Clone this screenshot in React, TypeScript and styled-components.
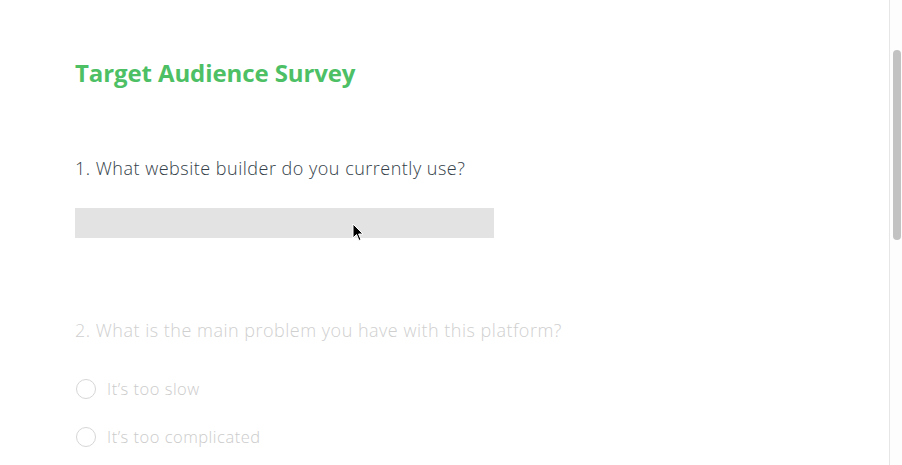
import React from 'react';
import styled, { createGlobalStyle } from 'styled-components';

const GlobalStyle = createGlobalStyle`
  html, body {
    margin: 0;
    padding: 0;
    height: 100%;
    overflow: hidden;
    background: #ffffff;
  }
  #root {
    height: 100%;
  }
`;

const Page = styled.div`
  display: flex;
  width: 902px;
  height: 465px;
  font-family: "Open Sans", Lato, sans-serif;
`;

const Main = styled.main`
  flex: 1;
  padding: 58px 0 0 75px;
  position: relative;
`;

const Title = styled.h1`
  margin: 0;
  font-size: 24px;
  font-weight: 700;
  color: #4dbf65;
  line-height: 30px;
  letter-spacing: -0.1px;
`;

const Question = styled.section<{ $faded?: boolean }>`
  margin-top: ${p => (p.$faded ? '80px' : '68px')};
  color: ${p => (p.$faded ? '#cfcfcf' : '#333e48')};
`;

const QuestionText = styled.div`
  font-size: 18px;
  font-weight: 300;
  line-height: 24px;
  letter-spacing: 0.5px;
`;

const TextInput = styled.div`
  margin-top: 28px;
  width: 419px;
  height: 30px;
  background: #e3e3e3;
  position: relative;
`;

const Options = styled.div`
  margin-top: 37px;
  display: flex;
  flex-direction: column;
  gap: 28px;
`;

const Option = styled.label`
  display: flex;
  align-items: center;
  gap: 11px;
  font-size: 16.5px;
  font-weight: 300;
  color: #cccccc;
  line-height: 20px;
  letter-spacing: 0.5px;
`;

const Radio = styled.span`
  width: 18px;
  height: 18px;
  border: 1px solid #d6d6d6;
  border-radius: 50%;
  margin-left: 1px;
`;

const Cursor = styled.svg`
  position: absolute;
  left: 277px;
  top: 15px;
`;

const ScrollTrack = styled.div`
  width: 12px;
  border-left: 1px solid #e6e6e6;
  display: flex;
  justify-content: center;
  padding-top: 50px;
  background: #fdfdfd;
`;

const ScrollThumb = styled.div`
  width: 8px;
  height: 190px;
  border-radius: 4px;
  background: #c2c2c2;
  margin-left: 1px;
`;

export default function App() {
  return (
    <>
      <GlobalStyle />
      <Page>
        <Main>
          <Title>Target Audience Survey</Title>
          <Question>
            <QuestionText>1. What website builder do you currently use?</QuestionText>
            <TextInput>
              <Cursor width="12" height="19" viewBox="0 0 12 19">
                <path
                  d="M1 1 L1 15 L4.5 11.5 L7 17.5 L9 16.6 L6.6 11 L11 11 Z"
                  fill="#000"
                  stroke="#fff"
                  strokeWidth="1"
                  strokeLinejoin="round"
                />
              </Cursor>
            </TextInput>
          </Question>
          <Question $faded>
            <QuestionText>2. What is the main problem you have with this platform?</QuestionText>
            <Options>
              <Option>
                <Radio />
                It’s too slow
              </Option>
              <Option>
                <Radio />
                It’s too complicated
              </Option>
            </Options>
          </Question>
        </Main>
        <ScrollTrack>
          <ScrollThumb />
        </ScrollTrack>
      </Page>
    </>
  );
}
